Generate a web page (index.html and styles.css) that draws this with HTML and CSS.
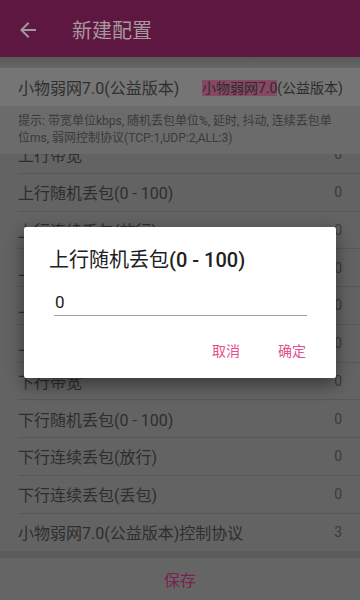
FILE: index.html
```html
<!DOCTYPE html>
<html lang="zh-CN">
<head>
<meta charset="utf-8">
<title>新建配置</title>
<link rel="stylesheet" href="styles.css">
</head>
<body>
<div class="screen">
  <header class="appbar">
    <svg class="back" viewBox="0 0 24 24" width="24" height="24"><path d="M20 11H7.83l5.59-5.59L12 4l-8 8 8 8 1.41-1.41L7.83 13H20v-2z" fill="currentColor"/></svg>
    <h1 class="title">新建配置</h1>
  </header>
  <div class="band"></div>
  <div class="name-row">
    <span class="name-label">小物弱网7.0(公益版本)</span>
    <span class="name-input"><mark class="sel">小物弱网7.0</mark>(公益版本)</span>
  </div>
  <p class="hint"><span class="hint-line">提示: 带宽单位kbps, 随机丢包单位%, 延时, 抖动, 连续丢包单</span><br><span class="hint-line">位ms, 弱网控制协议(TCP:1,UDP:2,ALL:3)</span></p>
  <div class="list">
    <div class="list-inner">
      <div class="row"><div class="row-body"><span class="label">上行带宽</span><span class="value">0</span></div></div>
      <div class="row"><div class="row-body"><span class="label">上行随机丢包(0 - 100)</span><span class="value">0</span></div></div>
      <div class="row"><div class="row-body"><span class="label">上行连续丢包(放行)</span><span class="value">0</span></div></div>
      <div class="row"><div class="row-body"><span class="label">上行连续丢包(丢包)</span><span class="value">0</span></div></div>
      <div class="row"><div class="row-body"><span class="label">上行延时</span><span class="value">0</span></div></div>
      <div class="row"><div class="row-body"><span class="label">上行抖动</span><span class="value">0</span></div></div>
      <div class="row"><div class="row-body"><span class="label">下行带宽</span><span class="value">0</span></div></div>
      <div class="row"><div class="row-body"><span class="label">下行随机丢包(0 - 100)</span><span class="value">0</span></div></div>
      <div class="row"><div class="row-body"><span class="label">下行连续丢包(放行)</span><span class="value">0</span></div></div>
      <div class="row"><div class="row-body"><span class="label">下行连续丢包(丢包)</span><span class="value">0</span></div></div>
      <div class="row"><div class="row-body no-line"><span class="label">小物弱网7.0(公益版本)控制协议</span><span class="value">3</span></div></div>
    </div>
  </div>
  <div class="footer-band"></div>
  <div class="save">保存</div>
</div>

<div class="dialog">
  <h2 class="dialog-title">上行随机丢包<span class="latin">(0 - 100)</span></h2>
  <div class="field">0</div>
  <div class="actions">
    <span class="action">取消</span>
    <span class="action">确定</span>
  </div>
</div>
</body>
</html>
```

FILE: styles.css
```css
html, body {
  margin: 0;
  padding: 0;
}
body {
  width: 360px;
  height: 600px;
  overflow: hidden;
  position: relative;
  background: #636363;
  font-family: Roboto, "Noto Sans CJK SC", sans-serif;
  color: #2e2e2e;
}
.screen {
  display: flex;
  flex-direction: column;
  height: 600px;
}
.appbar {
  height: 57px;
  flex: none;
  background: #5d1740;
  display: flex;
  align-items: center;
  padding: 2px 0 0 16px;
  box-sizing: border-box;
  color: #a5959e;
}
.back {
  display: block;
  flex: none;
}
.title {
  margin: 0 0 0 32px;
  font-size: 20px;
  font-weight: 400;
  color: #a8999f;
}
.band {
  height: 11px;
  flex: none;
  background: linear-gradient(#5a5a5a, #666666);
}
.name-row {
  height: 38px;
  flex: none;
  background: #757575;
  display: flex;
  align-items: center;
  justify-content: space-between;
  padding: 0 17px 0 18px;
}
.name-label {
  font-size: 16px;
  color: #2f2f2f;
}
.name-input {
  font-size: 14px;
  color: #2c2c2c;
}
.sel {
  background: #864862;
  color: #2c2c2c;
}
.hint {
  margin: 0;
  height: 48px;
  box-sizing: border-box;
  flex: none;
  background: #6b6b6b;
  padding: 7px 18px;
  font-size: 12px;
  line-height: 17px;
  color: #3a3a3a;
}
.hint-line {
  white-space: nowrap;
}
.list {
  flex: none;
  height: 397px;
  overflow: hidden;
  background: #636363;
}
.list-inner {
  margin-top: -18px;
}
.row {
  padding-left: 18px;
}
.row-body {
  height: 37.75px;
  box-sizing: border-box;
  border-bottom: 1px solid #585858;
  display: flex;
  align-items: center;
  justify-content: space-between;
  padding-right: 18px;
}
.row-body.no-line {
  border-bottom: none;
}
.label {
  font-size: 16px;
  color: #2e2e2e;
}
.value {
  font-size: 14px;
  color: #3a3a3a;
}
.footer-band {
  height: 7px;
  flex: none;
  background: #5b5b5b;
}
.save {
  flex: 1;
  display: flex;
  align-items: center;
  justify-content: center;
  background: #656565;
  font-size: 16px;
  color: #7b1e50;
}
.dialog {
  position: absolute;
  left: 24px;
  top: 227px;
  width: 312px;
  height: 151px;
  box-sizing: border-box;
  background: #ffffff;
  border-radius: 2px;
  box-shadow: 0 6px 18px rgba(0, 0, 0, 0.45);
  padding: 20px 29px 0 25px;
  display: flex;
  flex-direction: column;
}
.dialog-title {
  margin: 0;
  font-size: 20px;
  line-height: 26px;
  font-weight: 400;
  color: #212121;
}
.latin {
  font-weight: 500;
}
.field {
  margin: 16px 0 0 5px;
  font-size: 17px;
  line-height: 26px;
  height: 26px;
  padding-left: 1px;
  border-bottom: 1.5px solid #a3a3a3;
  color: #212121;
}
.actions {
  display: flex;
  justify-content: flex-end;
  gap: 38px;
  margin-top: 25px;
  padding-right: 1px;
}
.action {
  font-size: 14px;
  line-height: 20px;
  color: #e4508c;
}
```
